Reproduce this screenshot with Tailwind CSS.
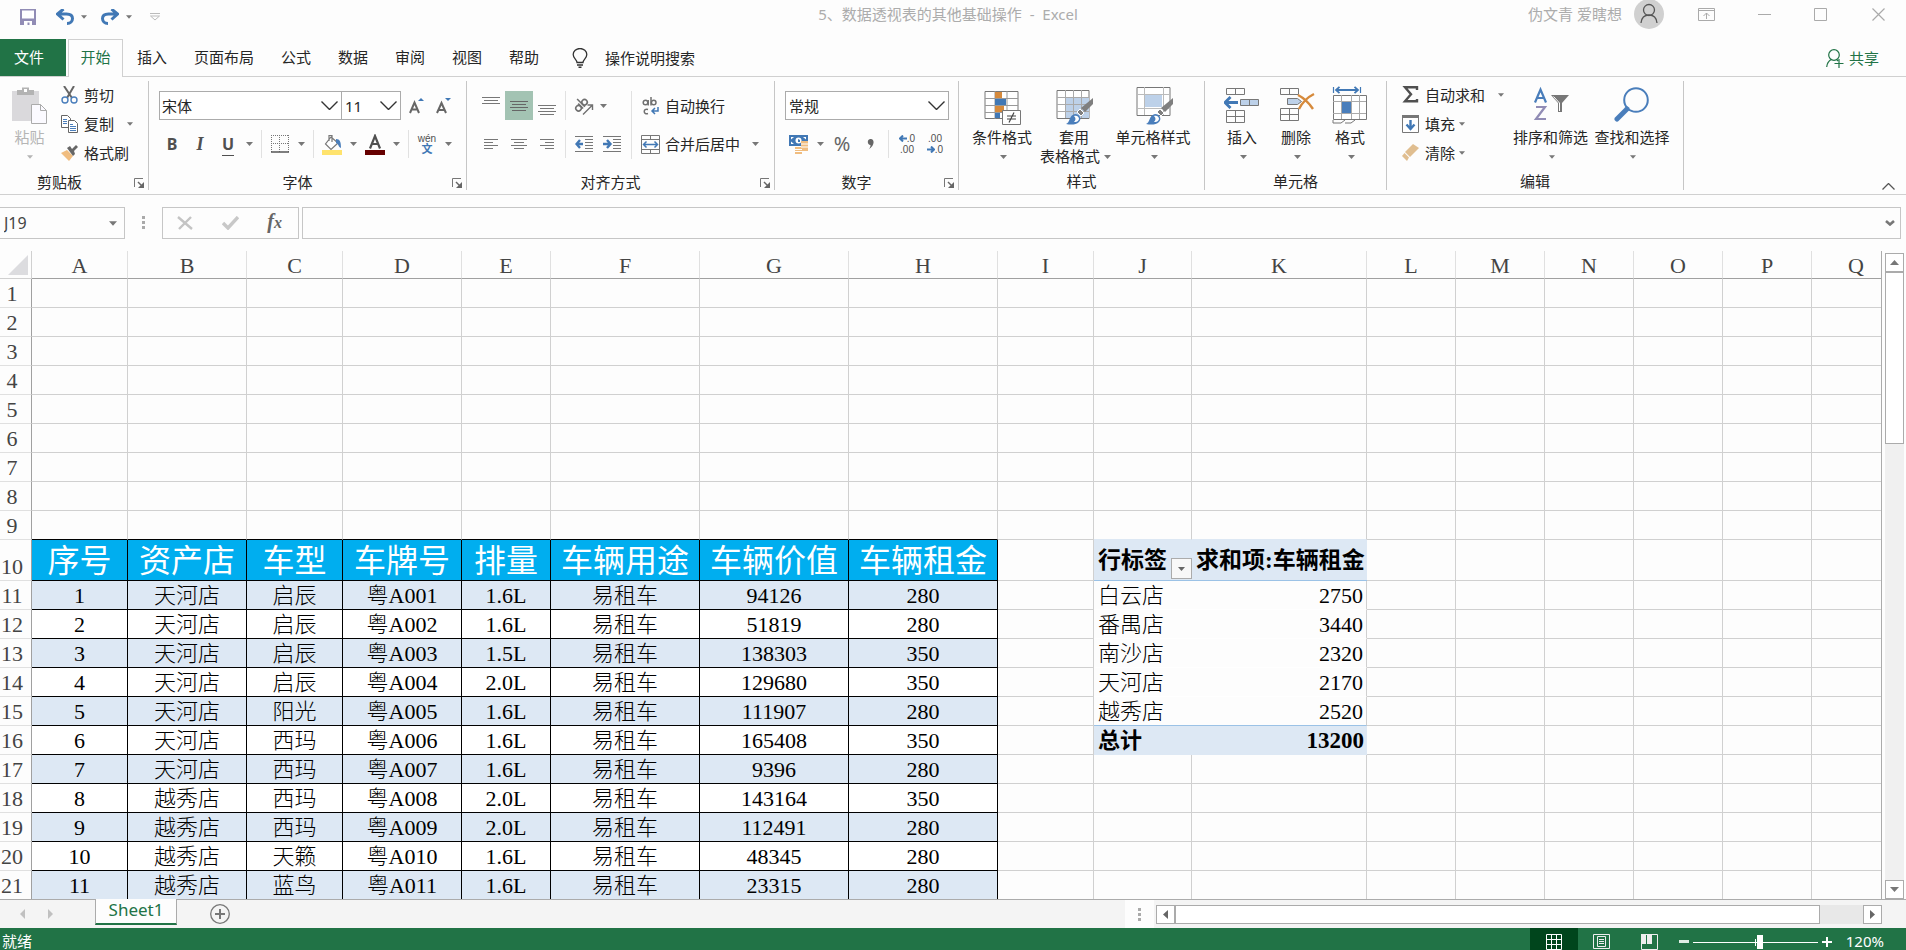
<!DOCTYPE html>
<html lang="zh-CN">
<head>
    <meta charset="UTF-8">
    <meta name="viewport" content="width=device-width, initial-scale=1.0">
    <title>5、数据透视表的其他基础操作 - Excel</title>
    <script src="https://cdn.jsdelivr.net/npm/@tailwindcss/browser@4"></script>
</head>
<body class="bg-[#fdfdfd] font-['Noto_Sans','Noto_Sans_CJK_SC',sans-serif] text-[15px] leading-5 text-[#262626]">

<svg class="hidden" xmlns="http://www.w3.org/2000/svg">
    <symbol id="caret" viewBox="0 0 7 4"><path d="M0 0h7L3.5 4z" fill="currentColor"/></symbol>
    <symbol id="chevron" viewBox="0 0 17 9"><path d="M.5.5l8 8 8-8" fill="none" stroke="#333" stroke-width="1.4"/></symbol>
    <symbol id="launcher" viewBox="0 0 11 11"><path d="M.5 9V.5H9" fill="none" stroke="#777"/><path d="M4 4l4 4" stroke="#666" stroke-width="1.5"/><path d="M10 4v6H4z" fill="#666"/></symbol>
    <symbol id="brush" viewBox="0 0 28 28"><path d="M27 0v6l-8 8-4-4z" fill="#7f7f7f"/><path d="M14 11l4 4-3 3-4-4z" fill="#7f7f7f" stroke="#fff"/><path d="M0 26c4-1 3-9 9-10 5 0 7 5 4 8-3 3-8 3-13 2z" fill="#4a7ebb"/><path d="M8 18c3-1 5 1 5 3-1 3-3 3-5 3 2-2 2-4 0-6z" fill="#fff"/></symbol>
</svg>

<div class="flex flex-col h-screen overflow-hidden">

    <!-- Barra de título -->
    <header class="flex items-start justify-between h-[39px] shrink-0 text-[#acacac]">
        <div class="flex items-center h-[33px] pl-5">
            <button aria-label="保存"><svg class="w-4 h-4" viewBox="0 0 16 16"><path d="M0 0h16v16H0z" fill="#918cb5"/><path d="M2 1.500h12v8H2zM4 12h8v4H9.500v-2.500h-2V16H4z" fill="#fff"/></svg></button>
            <button class="ml-5" aria-label="撤消"><svg class="w-[18px] h-4" viewBox="0 0 18 16"><path d="M7.500 0L1.500 5l6 5.500M2 5h8.500c4 0 6 2 6 4.500s-2 5-5.500 5" fill="none" stroke="#4178b5" stroke-width="3"/></svg></button>
            <button class="ml-[7px] text-[#777]" aria-label="撤消列表"><svg class="w-[6px] h-1"><use href="#caret"/></svg></button>
            <button class="ml-[14px]" aria-label="恢复"><svg class="w-[18px] h-4" viewBox="0 0 18 16"><path d="M10.500 0l6 5-6 5.500M16 5H7.500c-4 0-6 2-6 4.500s2 5 5.500 5" fill="none" stroke="#4178b5" stroke-width="3"/></svg></button>
            <button class="ml-[7px] text-[#777]" aria-label="恢复列表"><svg class="w-[6px] h-1"><use href="#caret"/></svg></button>
            <button class="ml-[18px]" aria-label="自定义快速访问工具栏"><svg class="w-[10px] h-[8px]" viewBox="0 0 10 8" fill="none" stroke="#bbb"><path d="M0 .5h10M.5 3l4.500 4L9.500 3z"/></svg></button>
        </div>
        <h1 class="pt-1 pl-[208px] whitespace-pre">5、数据透视表的其他基础操作  -  Excel</h1>
        <div class="flex items-center h-7 pr-[21px]">
            <span>伪文青 爱瞎想</span>
            <button class="ml-3 -mt-px" aria-label="帐户"><svg class="w-[30px] h-[30px]" viewBox="0 0 30 30" fill="none"><circle cx="15" cy="15" r="15" fill="#d0d0d0"/><g stroke="#555" stroke-width="1.300"><circle cx="15" cy="11" r="5.500"/><path d="M7 24c.5-5 3.500-8 8-8s7.500 3 8 8"/></g></svg></button>
            <button class="ml-[34px]" aria-label="功能区显示选项"><svg class="w-[17px] h-[13px]" viewBox="0 0 17 13" fill="none" stroke="#aaa"><path d="M.5.5h16v12H.5zM.5 2.500h16M8.500 11V5M5.500 8l3-3 3 3"/></svg></button>
            <button class="ml-[43px]" aria-label="最小化"><svg class="w-[13px] h-[13px]" viewBox="0 0 13 13"><path d="M0 6.500h13" stroke="#aaa"/></svg></button>
            <button class="ml-[43px]" aria-label="最大化"><svg class="w-[13px] h-[13px]" viewBox="0 0 13 13"><path d="M.5.5h12v12H.5z" fill="none" stroke="#aaa"/></svg></button>
            <button class="ml-[45px]" aria-label="关闭"><svg class="w-[13px] h-[13px]" viewBox="0 0 13 13"><path d="M.5.5l12 12M12.500.5l-12 12" stroke="#aaa" stroke-width="1.200"/></svg></button>
        </div>
    </header>

    <!-- Pestañas -->
    <nav class="flex h-[38px] shrink-0 border-b border-[#d0d0d0]">
        <button class="w-[66px] h-[37px] pb-[2px] pr-2 bg-[#217346] text-white">文件</button>
        <button class="w-[55px] h-[38px] pb-1 ml-[2px] border border-b-0 border-[#d0d0d0] bg-[#fdfdfd] text-[#217346]">开始</button>
        <div class="flex items-center gap-[27px] pl-[14px] pb-[2px] h-[37px]">
            <button>插入</button>
            <button>页面布局</button>
            <button>公式</button>
            <button>数据</button>
            <button>审阅</button>
            <button>视图</button>
            <button>帮助</button>
        </div>
        <button class="flex items-center gap-[17px] pl-[33px] h-[37px]">
            <svg class="w-4 h-5" viewBox="0 0 16 20" fill="none" stroke="#333" stroke-width="1.300"><path d="M5 14.500c0-3-3.800-4-3.800-8a6.800 6.000 0 0 1 13.600 0c0 4-3.800 5-3.800 8z"/><path d="M5 17h6M6.500 19.200h3" stroke-width="1.600"/></svg>
            <span>操作说明搜索</span>
        </button>
        <button class="flex items-center gap-[5px] ml-auto pr-[27px] h-[38px] text-[#217346]">
            <svg class="w-[18px] h-[19px]" viewBox="0 0 18 19" fill="none" stroke="#217346" stroke-width="1.200"><circle cx="8" cy="6" r="5.300"/><path d="M.7 18c.3-4 2-6 4.500-7.500M11 11l1 1M13 10v9M8.500 14.500h9"/></svg>
            <span>共享</span>
        </button>
    </nav>

    <!-- Cinta de opciones -->
    <section class="flex h-[118px] shrink-0 py-1 border-b border-[#d0d0d0]">
        <div class="flex flex-col w-[149px] border-r border-[#c6c6c6]">
            <div class="flex flex-1">
                <button class="flex flex-col items-center w-[61px] pt-[5px] pr-[2px] leading-[19px] text-[#b5b5b5]">
                    <svg class="w-[35px] h-10 mb-[2px]" viewBox="0 0 35 40"><path d="M0 5h27v30H0z" fill="#dad9dc"/><path d="M5 9V4h5V1.500h7V4h5v5z" fill="#b3b3b3"/><path d="M12 3h3v3h-3z" fill="#fff"/><path d="M19.500 18.500h9l6 6v13h-15z" fill="#fbfaff" stroke="#ababab"/><path d="M28.500 18.500v6h6" fill="none" stroke="#ababab"/></svg>
                    <span>粘贴</span>
                    <svg class="w-[6px] h-1 mt-2"><use href="#caret"/></svg>
                </button>
                <div class="flex flex-col -mt-px">
                    <button class="flex items-center gap-[6px] h-[29px]">
                        <svg class="w-[17px] h-[18px]" viewBox="0 0 17 18" fill="none"><path d="M3 0l8 12M13 0L6 12" stroke="#666" stroke-width="2"/><circle cx="4" cy="14" r="3" stroke="#4a7ebb" stroke-width="1.400"/><circle cx="13" cy="14" r="3" stroke="#4a7ebb" stroke-width="1.400"/></svg>
                        <span>剪切</span>
                    </button>
                    <button class="flex items-center gap-[6px] h-[29px]">
                        <svg class="w-[17px] h-[18px]" viewBox="0 0 17 18" fill="#fff"><path d="M.5.5h6l3 3v9h-9z" stroke="#666"/><path d="M2 4.500h4M2 6.500h4M2 8.500h4" stroke="#4a7ebb"/><path d="M7.500 5.500h6l3 3v9h-9z" stroke="#666"/><path d="M9 9.500h3M9 11.500h6M9 13.500h6M9 15.500h6" stroke="#4a7ebb"/></svg>
                        <span>复制</span>
                        <svg class="w-[6px] h-1 ml-[7px] text-[#777]"><use href="#caret"/></svg>
                    </button>
                    <button class="flex items-center gap-[6px] h-[29px]">
                        <svg class="w-[17px] h-[16px]" viewBox="0 0 17 16"><path d="M0 8l6-3 6 6-4 5z" fill="#f0bd80"/><path d="M6 3l3-2 2 3 4-4 2 2-4 4 1 3-2 2z" fill="#666"/></svg>
                        <span>格式刷</span>
                    </button>
                </div>
            </div>
            <div class="flex h-[17px] items-center">
                <h2 class="flex-1 text-center pr-[15px]">剪贴板</h2>
                <button class="w-[14px] pt-1" aria-label="剪贴板选项"><svg class="w-[11px] h-[11px]"><use href="#launcher"/></svg></button>
            </div>
        </div>

        <div class="flex flex-col w-[318px] border-r border-[#c6c6c6]">
            <div class="flex-1 pt-[10px] pl-[10px]">
                <div class="flex h-[29px]">
                    <div class="relative">
                        <select aria-label="字体" class="appearance-none w-[183px] h-[29px] border border-[#ababab] pl-[2px] bg-white"><option>宋体</option></select>
                        <svg class="absolute right-[4px] top-[10px] w-[17px] h-[9px] pointer-events-none"><use href="#chevron"/></svg>
                    </div>
                    <div class="relative -ml-px">
                        <select aria-label="字号" class="appearance-none w-[60px] h-[29px] border border-[#ababab] pl-[3px] bg-white"><option>11</option></select>
                        <svg class="absolute right-[4px] top-[10px] w-[17px] h-[9px] pointer-events-none"><use href="#chevron"/></svg>
                    </div>
                    <button class="w-7 grid place-items-center ml-[2px]" aria-label="增大字号"><svg class="w-4 h-4" viewBox="0 0 16 16"><path d="M1 15L5.500 4.500 10 15M2.800 11.500h5.500" fill="none" stroke="#666" stroke-width="2"/><path d="M9 3l3-3 3 3z" fill="#4178b5"/></svg></button>
                    <button class="w-[26px] grid place-items-center" aria-label="减小字号"><svg class="w-4 h-4" viewBox="0 0 16 16"><path d="M1 15L5.500 5 10 15M2.800 12h5.500" fill="none" stroke="#666" stroke-width="2"/><path d="M9 0h6l-3 3z" fill="#4178b5"/></svg></button>
                </div>
                <div class="flex h-7 mt-[10px] -ml-px text-[#777]">
                    <button class="w-7 text-base font-bold text-[#505050]">B</button>
                    <button class="w-7 text-lg font-bold italic font-['Liberation_Serif',serif] text-[#505050]">I</button>
                    <button class="w-7 text-base font-bold text-[#505050]"><span class="border-b border-[#505050]">U</span></button>
                    <button class="w-[15px] grid place-items-center" aria-label="下划线选项"><svg class="w-[7px] h-1"><use href="#caret"/></svg></button>
                    <i class="w-px mx-1 bg-[#e1e1e1]"></i>
                    <button class="w-7 grid place-items-center" aria-label="边框"><svg class="w-[18px] h-[18px]" viewBox="0 0 18 18" fill="none" stroke="#777"><path d="M.5 0v17M8.500 0v17M17.500 0v17M0 .5h18M0 8.500h18" stroke-dasharray="1 1"/><path d="M0 17h18" stroke="#555" stroke-width="1.500"/></svg></button>
                    <button class="w-[15px] grid place-items-center" aria-label="边框选项"><svg class="w-[7px] h-1"><use href="#caret"/></svg></button>
                    <i class="w-px mx-1 bg-[#e1e1e1]"></i>
                    <button class="w-7 grid place-items-center" aria-label="填充颜色"><svg class="w-5 h-[21px]" viewBox="0 0 20 21"><path d="M9 3l7 6-7 6.500L3.500 10zM7 7V1.500h3V8" fill="#fff" stroke="#777" stroke-width="1.200"/><path d="M14 5c4 0 5 3 5 9-3-1-2-4-5-5z" fill="#4a7ebb"/><path d="M0 16h20v5H0z" fill="#ffe36d"/></svg></button>
                    <button class="w-[15px] grid place-items-center" aria-label="填充颜色选项"><svg class="w-[7px] h-1"><use href="#caret"/></svg></button>
                    <button class="w-7 grid place-items-center" aria-label="字体颜色"><svg class="w-5 h-[21px]" viewBox="0 0 20 21"><path d="M5 14.500L10 2l5 12.500M6.500 10h7" fill="none" stroke="#505050" stroke-width="2.200"/><path d="M0 16h20v5H0z" fill="#600"/></svg></button>
                    <button class="w-[15px] grid place-items-center" aria-label="字体颜色选项"><svg class="w-[7px] h-1"><use href="#caret"/></svg></button>
                    <i class="w-px mx-1 bg-[#e1e1e1]"></i>
                    <button class="w-7 flex flex-col items-center justify-center text-[10px] leading-[10px] text-[#505050] font-['Liberation_Sans','Noto_Sans_CJK_SC',sans-serif]">wén<span class="text-[11px] leading-[11px] font-bold text-[#4178b5]">文</span></button>
                    <button class="w-[15px] grid place-items-center" aria-label="拼音选项"><svg class="w-[7px] h-1"><use href="#caret"/></svg></button>
                </div>
            </div>
            <div class="flex h-[17px] items-center">
                <h2 class="flex-1 text-center pr-[6px]">字体</h2>
                <button class="w-[14px] pt-1" aria-label="字体选项"><svg class="w-[11px] h-[11px]"><use href="#launcher"/></svg></button>
            </div>
        </div>

        <div class="flex flex-col w-[308px] border-r border-[#c6c6c6]">
            <div class="flex flex-1 pt-[10px] pl-[10px]">
                <div class="w-[154px]">
                    <div class="flex h-[29px] text-[#777]">
                        <button class="w-7 grid place-items-center" aria-label="顶端对齐"><svg class="w-[18px] h-5" viewBox="0 0 18 20" stroke="#777"><path d="M0 1.500h18M2 4.500h14M0 7.500h18"/></svg></button>
                        <button class="w-7 grid place-items-center bg-[#a3c3b3]" aria-label="垂直居中"><svg class="w-[18px] h-5" viewBox="0 0 18 20" stroke="#666"><path d="M0 5.500h18M2 8.500h14M0 11.500h18M2 14.500h14"/></svg></button>
                        <button class="w-7 grid place-items-center" aria-label="底端对齐"><svg class="w-[18px] h-5" viewBox="0 0 18 20" stroke="#777"><path d="M0 9.500h18M2 12.500h14M0 15.500h18M2 18.500h14"/></svg></button>
                        <i class="w-px mx-1 bg-[#e1e1e1]"></i>
                        <button class="w-7 grid place-items-center" aria-label="方向">
                            <svg class="w-5 h-5" viewBox="0 0 20 20" fill="none" stroke="#707070" stroke-width="1.600"><g transform="rotate(-45 7 9)"><circle cx="3" cy="9.500" r="2.700"/><path d="M6 6v7M8.500 2v11"/><circle cx="11.500" cy="9.500" r="2.700"/></g><path d="M9 18.500L18 9.500M13.500 9H18.500v5" stroke-width="1.400"/></svg>
                        </button>
                        <button class="w-[10px] grid place-items-center" aria-label="方向选项"><svg class="w-[7px] h-1"><use href="#caret"/></svg></button>
                    </div>
                    <div class="flex h-7 mt-[10px]">
                        <button class="w-7 grid place-items-center" aria-label="左对齐"><svg class="w-4 h-[12px]" viewBox="0 0 16 12" stroke="#777"><path d="M1 1.500h14M1 4.500h9M1 7.500h14M1 10.500h9"/></svg></button>
                        <button class="w-7 grid place-items-center" aria-label="居中"><svg class="w-4 h-[12px]" viewBox="0 0 16 12" stroke="#777"><path d="M0 1.500h16M3 4.500h10M0 7.500h16M3 10.500h10"/></svg></button>
                        <button class="w-7 grid place-items-center" aria-label="右对齐"><svg class="w-4 h-[12px]" viewBox="0 0 16 12" stroke="#777"><path d="M1 1.500h14M6 4.500h9M1 7.500h14M6 10.500h9"/></svg></button>
                        <i class="w-px mx-1 bg-[#e1e1e1]"></i>
                        <button class="w-7 grid place-items-center" aria-label="减少缩进量"><svg class="w-[18px] h-4" viewBox="0 0 18 16" fill="none"><path d="M0 .5h18M10 3.500h8M10 6.500h8M10 9.500h8M10 12.500h8M0 15.500h18" stroke="#777"/><path d="M8 8H2M5 4L1.500 8 5 12" stroke="#4178b5" stroke-width="2.400"/></svg></button>
                        <button class="w-7 grid place-items-center" aria-label="增加缩进量"><svg class="w-[18px] h-4" viewBox="0 0 18 16" fill="none"><path d="M0 .5h18M10 3.500h8M10 6.500h8M10 9.500h8M10 12.500h8M0 15.500h18" stroke="#777"/><path d="M0 8h6M4 4l3.500 4L4 12" stroke="#4178b5" stroke-width="2.400"/></svg></button>
                    </div>
                </div>
                <div class="border-l border-[#e1e1e1] h-[68px] pl-[9px]">
                    <button class="flex items-center gap-1 h-[29px]">
                        <svg class="w-5 h-[18px]" viewBox="0 0 20 18" fill="none" stroke="#707070" stroke-width="1.500"><circle cx="4.500" cy="5.500" r="2.300"/><path d="M7.200 3v5.500M10 0v8.500"/><circle cx="12.700" cy="5.500" r="2.300"/><path d="M7 12.500c-5-1.500-5 5.500 0 4"/><path d="M17 10v4h-6M14 11l-3 3 3 3" stroke="#4178b5"/></svg>
                        <span>自动换行</span>
                    </button>
                    <button class="flex items-center gap-1 h-7 mt-[10px]">
                        <svg class="w-5 h-[19px]" viewBox="0 0 20 19" fill="none"><path d="M.5.5h18v18H.5zM0 4.500h19M0 14.500h19M9.500 0v4M9.500 15v4" stroke="#777"/><path d="M3 9.500h13M5.500 6.500l-3 3 3 3M13.500 6.500l3 3-3 3" stroke="#4178b5" stroke-width="1.500"/></svg>
                        <span>合并后居中</span>
                        <svg class="w-[7px] h-1 ml-2 text-[#777]"><use href="#caret"/></svg>
                    </button>
                </div>
            </div>
            <div class="flex h-[17px] items-center">
                <h2 class="flex-1 text-center pr-[6px]">对齐方式</h2>
                <button class="w-[14px] pt-1" aria-label="对齐选项"><svg class="w-[11px] h-[11px]"><use href="#launcher"/></svg></button>
            </div>
        </div>

        <div class="flex flex-col w-[184px] border-r border-[#c6c6c6]">
            <div class="flex-1 pt-[10px] pl-[10px]">
                <div class="relative w-[164px]">
                    <select aria-label="数字格式" class="block appearance-none w-full h-[29px] border border-[#ababab] pl-[3px] bg-white"><option>常规</option></select>
                    <svg class="absolute right-[4px] top-[10px] w-[17px] h-[9px] pointer-events-none"><use href="#chevron"/></svg>
                </div>
                <div class="flex h-7 mt-[10px] text-[#777]">
                    <button class="w-7 grid place-items-center" aria-label="会计数字格式"><svg class="w-5 h-[19px]" viewBox="0 0 20 19"><path d="M0 0h19v11H0z" fill="#4178b5"/><path d="M2 2h3L2 4.500zM17 2h-3l3 2.500zM2 9h3L2 6.500z" fill="#fff"/><circle cx="9.500" cy="5.500" r="3" fill="#fff"/><path d="M9 4l2 1v2H9z" fill="#4178b5"/><path d="M12 6h7v10h-6v3H6v-7h6z" fill="#f0bd80"/><path d="M12 9h7M12 12h7M6 14.500h7M6 16.500h7" stroke="#fff"/></svg></button>
                    <button class="w-[15px] grid place-items-center" aria-label="会计格式选项"><svg class="w-[7px] h-1"><use href="#caret"/></svg></button>
                    <button class="w-7 text-xl text-[#666]">%</button>
                    <button class="w-7 grid place-items-center" aria-label="千位分隔样式"><svg class="w-[7px] h-[11px]" viewBox="0 0 7 11"><path d="M3 0c5-.5 5 7-1.500 10.500C3 9 3.500 7.500 3.500 6 0 6 0 .5 3 0z" fill="#666"/></svg></button>
                    <i class="w-px mx-1 bg-[#e1e1e1]"></i>
                    <button class="w-7 flex flex-col items-center justify-center text-[10px] leading-[11px] text-[#505050] font-['Liberation_Sans',sans-serif]"><span class="flex items-center"><svg class="w-2 h-[7px]" viewBox="0 0 8 7"><path d="M8 3.500H1.500M4 .5l-3 3 3 3" fill="none" stroke="#4178b5" stroke-width="2"/></svg>.0</span><span>.00</span></button>
                    <button class="w-7 flex flex-col items-center justify-center text-[10px] leading-[11px] text-[#505050] font-['Liberation_Sans',sans-serif]"><span>.00</span><span class="flex items-center"><svg class="w-2 h-[7px]" viewBox="0 0 8 7"><path d="M0 3.500h6.500M4 .5l3 3-3 3" fill="none" stroke="#4178b5" stroke-width="2"/></svg>.0</span></button>
                </div>
            </div>
            <div class="flex h-[17px] items-center">
                <h2 class="flex-1 text-center pr-[6px]">数字</h2>
                <button class="w-[14px] pt-1" aria-label="数字选项"><svg class="w-[11px] h-[11px]"><use href="#launcher"/></svg></button>
            </div>
        </div>

        <div class="flex flex-col w-[246px] border-r border-[#c6c6c6]">
            <div class="flex flex-1 pl-[7px] pt-[5px] leading-[19px]">
                <button class="flex flex-col items-center w-[72px]">
                    <svg class="w-[38px] h-10 mb-[2px] ml-[2px]" viewBox="0 0 38 40" fill="none"><path d="M1 5.500h33v27H1z" fill="#fff" stroke="#777"/><path d="M1 12.500h33M1 19.500h33M1 26.500h33M11 5v28M23 5v28" stroke="#999"/><path d="M11 6h7v6h-7zM11 20h9v6h-9z" fill="#d68a3c"/><path d="M11 13h11v6H11zM11 27h5v5h-5z" fill="#4178b5"/><path d="M18.500 24.500h18v14h-18z" fill="#fff" stroke="#777"/><path d="M23 30h9M23 33h9M30 26.500l-5 10" stroke="#444" stroke-width="1.200"/></svg>
                    <span>条件格式</span>
                    <svg class="w-[7px] h-1 mt-2 ml-[3px] text-[#777]"><use href="#caret"/></svg>
                </button>
                <button class="flex flex-col items-center w-[72px]">
                    <svg class="w-[38px] h-10 mb-[2px] ml-[2px]" viewBox="0 0 38 40" fill="none"><path d="M1 4.500h32v28H1z" fill="#fff" stroke="#777"/><path d="M9 12h24v20H9z" fill="#bdd1e9"/><path d="M1 11.500h32M1 18.500h32M1 25.500h32M9.500 4v28M17.500 4v28M25.500 4v28" stroke="#aaa"/><use href="#brush" x="10" y="12" width="28" height="28"/></svg>
                    <span>套用</span>
                    <span class="flex items-center gap-1 pl-[3px] whitespace-nowrap">表格格式<svg class="w-[7px] h-1 text-[#777]"><use href="#caret"/></svg></span>
                </button>
                <button class="flex flex-col items-center w-[86px]">
                    <svg class="w-[38px] h-10 mb-[2px] ml-1" viewBox="0 0 38 40" fill="none"><path d="M1 1.500h33v28H1z" fill="#fff" stroke="#777"/><path d="M1 8.500h33M1 22.500h33M8.500 1v28M27.500 1v28" stroke="#bbb"/><path d="M9 9h17v12H9z" fill="#bdd1e9"/><use href="#brush" x="10" y="12" width="28" height="28"/></svg>
                    <span>单元格样式</span>
                    <svg class="w-[7px] h-1 mt-2 ml-[3px] text-[#777]"><use href="#caret"/></svg>
                </button>
            </div>
            <h2 class="h-[17px] leading-[17px] text-center">样式</h2>
        </div>

        <div class="flex flex-col w-[182px] border-r border-[#c6c6c6]">
            <div class="flex flex-1 pl-[10px] pt-[5px] leading-[19px]">
                <button class="flex flex-col items-center w-[54px]">
                    <svg class="w-9 h-10 mb-[2px]" viewBox="0 0 36 40" fill="none"><path d="M2.500 2.500h18v6h-18zM11.500 2v6M2.500 24.500h18v12h-18zM2.500 30.500h18M11.500 24v12" stroke="#777"/><path d="M16.500 13.500h18v6h-18z" fill="#bdd1e9" stroke="#777"/><path d="M25.500 13v6" stroke="#777"/><path d="M14 16.500H2M6.500 11L1 16.500 6.500 22" stroke="#4178b5" stroke-width="2.800"/></svg>
                    <span>插入</span>
                    <svg class="w-[7px] h-1 mt-2 ml-[3px] text-[#777]"><use href="#caret"/></svg>
                </button>
                <button class="flex flex-col items-center w-[54px]">
                    <svg class="w-9 h-10 mb-[2px] ml-[2px]" viewBox="0 0 36 40" fill="none"><path d="M1.500 2.500h18v6h-18zM10.500 2v6M1.500 22.500h18v12h-18zM1.500 28.500h18M10.500 22v12" stroke="#777"/><path d="M8.500 12.500h10l4 3-4 3h-10z" fill="#bdd1e9" stroke="#777"/><path d="M19 9c6 3 11 8 15 14M35 8c-6 3-12 9-15 15" stroke="#d68a3c" stroke-width="2.400"/></svg>
                    <span>删除</span>
                    <svg class="w-[7px] h-1 mt-2 ml-[3px] text-[#777]"><use href="#caret"/></svg>
                </button>
                <button class="flex flex-col items-center w-[54px]">
                    <svg class="w-9 h-10 mb-[2px]" viewBox="0 0 36 40" fill="none"><path d="M1.500 1v6M28.500 1v6" stroke="#4178b5" stroke-width="1.200"/><path d="M4 4h22M7.500.8L4 4l3.500 3.200M22.500.8L26 4l-3.500 3.200" stroke="#4178b5" stroke-width="1.800"/><path d="M1.500 9.500h33v24h-33z" fill="#fff" stroke="#777"/><path d="M1 15.500h33M1 27.500h33M9.500 9v24M19.500 9v24M27.500 9v24" stroke="#aaa"/><path d="M10 16h9v11h-9z" fill="#4a7ebb"/><path d="M1 34v3h8l4-3M13 37h6l4-3" stroke="#777"/></svg>
                    <span>格式</span>
                    <svg class="w-[7px] h-1 mt-2 ml-[3px] text-[#777]"><use href="#caret"/></svg>
                </button>
            </div>
            <h2 class="h-[17px] leading-[17px] text-center">单元格</h2>
        </div>

        <div class="flex flex-col w-[297px] border-r border-[#c6c6c6]">
            <div class="flex flex-1">
                <div class="w-[123px] pl-[15px] -mt-px">
                    <button class="flex items-center gap-[6px] h-[29px] whitespace-nowrap">
                        <svg class="w-[17px] h-[17px]" viewBox="0 0 17 17"><path d="M15 4V1.200H3l6 7-6 7h12V13" fill="none" stroke="#505050" stroke-width="2.400"/></svg>
                        <span>自动求和</span>
                        <svg class="w-[6px] h-1 ml-[7px] text-[#777]"><use href="#caret"/></svg>
                    </button>
                    <button class="flex items-center gap-[6px] h-[29px]">
                        <svg class="w-[17px] h-[18px]" viewBox="0 0 17 18" fill="none"><path d="M.5.5h16v17H.5z" fill="#fff" stroke="#777"/><path d="M0 1.500h17" stroke="#777" stroke-width="3"/><path d="M8.500 5v8M4.500 9.500l4 4.500 4-4.500" stroke="#4178b5" stroke-width="2.400"/></svg>
                        <span>填充</span>
                        <svg class="w-[6px] h-1 -ml-[2px] text-[#777]"><use href="#caret"/></svg>
                    </button>
                    <button class="flex items-center gap-[6px] h-[29px]">
                        <svg class="w-[17px] h-[17px]" viewBox="0 0 17 17"><path d="M11 0l6 4-9 9-5-5z" fill="#e0be90"/><path d="M2.500 9L7 13.500 5 17 0 12z" fill="#e0be90"/></svg>
                        <span>清除</span>
                        <svg class="w-[6px] h-1 -ml-[2px] text-[#777]"><use href="#caret"/></svg>
                    </button>
                </div>
                <button class="flex flex-col items-center w-[81px] pt-[5px] leading-[19px]">
                    <svg class="w-9 h-10 mb-[2px]" viewBox="0 0 36 40" fill="none"><path d="M2 16.500L7.500 3.500 13 16.500M4 12h7" stroke="#4a7ebb" stroke-width="2.200"/><path d="M3 21h9L3 33h10" stroke="#918cb5" stroke-width="2.200"/><path d="M18 9h18l-7 8v9h-4v-9z" fill="#777"/><path d="M20.500 10.500l6 6.500v8" stroke="#fff"/></svg>
                    <span>排序和筛选</span>
                    <svg class="w-[6px] h-1 mt-2 ml-[2px] text-[#777]"><use href="#caret"/></svg>
                </button>
                <button class="flex flex-col items-center w-[82px] pt-[5px] leading-[19px]">
                    <svg class="w-9 h-10 mb-[2px]" viewBox="0 0 36 40" fill="none" stroke="#4a7ebb"><circle cx="22" cy="14" r="11.800" stroke-width="2"/><path d="M13 23L3 33" stroke-width="5" stroke-linecap="round"/></svg>
                    <span>查找和选择</span>
                    <svg class="w-[6px] h-1 mt-2 ml-[2px] text-[#777]"><use href="#caret"/></svg>
                </button>
            </div>
            <h2 class="h-[17px] leading-[17px] text-center">编辑</h2>
        </div>
        <button class="self-end ml-auto mr-[11px]" aria-label="折叠功能区"><svg class="w-[13px] h-[7px]" viewBox="0 0 13 7"><path d="M.5 6.500l6-6 6 6" fill="none" stroke="#555" stroke-width="1.300"/></svg></button>
    </section>

    <!-- Barra de fórmulas -->
    <section class="flex h-[56px] shrink-0 py-3 pr-[5px]">
        <div class="flex items-center w-[125px] border border-l-0 border-[#c6c6c6]">
            <input aria-label="名称框" value="J19" class="w-[109px] pl-1 outline-none text-base text-[#444]">
            <button aria-label="名称列表" class="text-[#777]"><svg class="w-2 h-[5px]"><use href="#caret"/></svg></button>
        </div>
        <svg class="w-[3px] h-[13px] mx-[17px] mt-[9px]" viewBox="0 0 3 13"><path d="M0 0h3v3H0zM0 5h3v3H0zM0 10h3v3H0z" fill="#aaa"/></svg>
        <div class="flex items-center justify-between w-[137px] pl-[14px] pr-4 border border-[#c6c6c6]">
            <button aria-label="取消"><svg class="w-4 h-[14px]" viewBox="0 0 16 14"><path d="M1 1l14 12M14 1L2 13" stroke="#c4c4c4" stroke-width="2.400"/></svg></button>
            <button aria-label="输入"><svg class="w-[17px] h-[14px]" viewBox="0 0 17 14"><path d="M1 7l5 5L16 1" fill="none" stroke="#c8c8c8" stroke-width="3.400"/></svg></button>
            <button aria-label="插入函数" class="font-['Liberation_Serif',serif] italic font-bold text-xl leading-5 text-[#666]">f<span class="text-base">x</span></button>
        </div>
        <div class="flex items-center flex-1 ml-[3px] pr-[5px] border border-[#c6c6c6]">
            <input aria-label="编辑栏" class="flex-1 h-full outline-none px-1">
            <button aria-label="展开编辑栏"><svg class="w-[10px] h-[6px]" viewBox="0 0 10 6"><path d="M1 1l4 3.500L9 1" fill="none" stroke="#777" stroke-width="2.600"/></svg></button>
        </div>
    </section>

    <!-- Hoja -->
    <main class="flex flex-1 min-h-0 border-b border-[#ababab]">
        <div class="flex-1 min-w-0 overflow-hidden border-r border-[#ababab] font-['Liberation_Serif','Noto_Sans_CJK_SC',serif] text-[22px] leading-[26px] text-black">
            <table class="table-fixed w-[1901px] border-separate border-spacing-0">
                <colgroup>
                    <col class="w-[32px]"><col class="w-[96px]"><col class="w-[119px]"><col class="w-[96px]"><col class="w-[119px]"><col class="w-[89px]"><col class="w-[149px]"><col class="w-[149px]"><col class="w-[149px]"><col class="w-[96px]"><col class="w-[98px]"><col class="w-[175px]"><col class="w-[89px]"><col class="w-[89px]"><col class="w-[89px]"><col class="w-[89px]"><col class="w-[89px]"><col class="w-[89px]">
                </colgroup>
                <thead><tr id="cols" class="h-[28px]"></tr></thead>
                <tbody id="rows"></tbody>
            </table>
        </div>
        <div class="flex flex-col w-6 pl-[3px] pr-[2px] pt-[2px]">
            <button aria-label="向上滚动" class="grid place-items-center h-[19px] shrink-0 border border-[#ababab] bg-white"><svg class="w-[9px] h-[5px]" viewBox="0 0 9 5"><path d="M4.500 0L9 5H0z" fill="#777"/></svg></button>
            <div class="flex-1 bg-[#f0f0f0]"><div class="h-[172px] border border-[#ababab] bg-white"></div></div>
            <button aria-label="向下滚动" class="grid place-items-center h-[19px] shrink-0 border border-[#ababab] bg-white"><svg class="w-[9px] h-[5px]" viewBox="0 0 9 5"><path d="M0 0h9L4.500 5z" fill="#777"/></svg></button>
        </div>
    </main>

    <!-- Pestañas de hojas -->
    <section class="flex h-[28px] shrink-0 bg-[#f4f4f4]">
        <div class="flex items-center w-[95px] pl-5 gap-[23px]">
            <button aria-label="上一张"><svg class="w-[5px] h-[10px]" viewBox="0 0 5 10"><path d="M5 0v10L0 5z" fill="#c0c0c0"/></svg></button>
            <button aria-label="下一张"><svg class="w-[5px] h-[10px]" viewBox="0 0 5 10"><path d="M0 0v10l5-5z" fill="#c0c0c0"/></svg></button>
        </div>
        <button class="w-[82px] h-[26px] -mt-px pb-[2px] border-x border-x-[#ababab] border-b-2 border-b-[#217346] bg-[#fdfdfd] text-[17px] text-[#217346]">Sheet1</button>
        <button class="ml-[33px]" aria-label="新工作表"><svg class="w-5 h-5" viewBox="0 0 20 20" fill="none" stroke="#777"><circle cx="10" cy="10" r="9.300" stroke-width="1.300"/><path d="M5 10h10M10 5v10" stroke-width="2"/></svg></button>
        <div class="flex items-center ml-auto mr-6 w-[757px]">
            <div class="grid place-items-center w-[29px] h-full mr-[2px] bg-[#fdfdfd]"><svg class="w-[3px] h-[13px]" viewBox="0 0 3 13"><path d="M0 0h3v3H0zM0 5h3v3H0zM0 10h3v3H0z" fill="#aaa"/></svg></div>
            <button aria-label="向左滚动" class="grid place-items-center w-[19px] h-[19px] border border-[#ababab] bg-white"><svg class="w-[5px] h-[9px]" viewBox="0 0 5 9"><path d="M5 0v9L0 4.500z" fill="#666"/></svg></button>
            <div class="flex-1 pr-[43px] bg-[#e8e8e8]"><div class="h-[19px] border border-[#ababab] bg-white"></div></div>
            <button aria-label="向右滚动" class="grid place-items-center w-[19px] h-[19px] border border-[#ababab] bg-white"><svg class="w-[5px] h-[9px]" viewBox="0 0 5 9"><path d="M0 0v9l5-4.500z" fill="#666"/></svg></button>
        </div>
    </section>

    <!-- Barra de estado -->
    <footer class="flex h-[22px] shrink-0 overflow-hidden bg-[#217346] text-white">
        <span class="h-[22px] pl-[2px] pt-1 leading-[18px]">就绪</span>
        <div class="flex ml-auto pr-[22px]">
            <button class="w-12 h-[22px] grid justify-center pt-[6px] bg-[#00451c]" aria-label="普通"><svg class="w-4 h-4" viewBox="0 0 16 16" fill="none" stroke="#fff"><path d="M.5.5h15v15H.5zM5.500 0v16M10.500 0v16M0 5.500h16M0 10.500h16"/></svg></button>
            <button class="w-12 h-[22px] grid justify-center pt-[6px]" aria-label="页面布局"><svg class="w-[17px] h-4" viewBox="0 0 17 16" fill="none" stroke="#eee"><path d="M.5.5h16v14H.5zM4.500 2.500h8v10h-8zM6 5.500h5M6 7.500h5M6 9.500h5"/></svg></button>
            <button class="w-12 h-[22px] grid justify-center pt-[6px]" aria-label="分页预览"><svg class="w-[17px] h-4" viewBox="0 0 17 16"><path d="M.5.5h16v15H.5z" fill="none" stroke="#eee"/><path d="M0 0h5v10H0zM6 0h5v10H6z" fill="#eee"/></svg></button>
            <button class="flex items-start ml-[5px] pt-3" aria-label="缩小"><svg class="block w-[10px] h-[3px]"><path d="M0 0h10v3H0z" fill="#dfeee5"/></svg></button>
            <div class="relative w-[125px] ml-1">
                <input type="range" min="10" max="230" value="120" aria-label="缩放" class="absolute inset-0 w-full opacity-0">
                <svg class="w-[125px] h-[22px] pointer-events-none" viewBox="0 0 125 22"><path d="M0 14.500h125M62.500 11v7" stroke="#fff"/><path d="M64 7h6v14h-6z" fill="#fff"/></svg>
            </div>
            <button class="flex items-start ml-1 pt-[9px]" aria-label="放大"><svg class="block w-[10px] h-[10px]" viewBox="0 0 10 10"><path d="M0 5h10M5 0v10" stroke="#fff" stroke-width="2"/></svg></button>
            <span class="pl-[14px] pt-1 leading-[18px]">120%</span>
        </div>
    </footer>
</div>

<script>
    const COLS = 'ABCDEFGHIJKLMNOPQ'.split('');
    const encabezados = ['序号', '资产店', '车型', '车牌号', '排量', '车辆用途', '车辆价值', '车辆租金'];
    const autos = [
        ['天河店', '启辰', '1.6L', 94126, 280],
        ['天河店', '启辰', '1.6L', 51819, 280],
        ['天河店', '启辰', '1.5L', 138303, 350],
        ['天河店', '启辰', '2.0L', 129680, 350],
        ['天河店', '阳光', '1.6L', 111907, 280],
        ['天河店', '西玛', '1.6L', 165408, 350],
        ['天河店', '西玛', '1.6L', 9396, 280],
        ['越秀店', '西玛', '2.0L', 143164, 350],
        ['越秀店', '西玛', '2.0L', 112491, 280],
        ['越秀店', '天籁', '1.6L', 48345, 280],
        ['越秀店', '蓝鸟', '1.6L', 23315, 280]
    ];
    const pivot = [['白云店', 2750], ['番禺店', 3440], ['南沙店', 2320], ['天河店', 2170], ['越秀店', 2520]];

    const filtro = '<button aria-label="筛选" class="absolute right-0 bottom-[1px] grid place-items-center w-[21px] h-[21px] border border-[#ababab] bg-[#f8f8f8] text-[#666]"><svg class="w-[7px] h-1"><use href="#caret"/></svg></button>';

    // Devuelve el <td> de la fila r (1-21) y la columna c (0 = A)
    function celda(r, c) {
        if (r === 9 && c < 8) return '<td class="border-r border-b border-r-[#d0d0d0] border-b-black"></td>';
        if (r === 10 && c < 8) return `<td class="border-r border-b border-black bg-[#00aeef] pt-[2px] text-white text-center text-[32px] leading-[38px] whitespace-nowrap">${encabezados[c]}</td>`;
        if (r > 10 && c < 8) {
            const n = r - 10, a = autos[n - 1];
            const valores = [n, a[0], a[1], '粤A' + String(n).padStart(3, '0'), a[2], '易租车', a[3], a[4]];
            const fondo = n % 2 ? 'bg-[#dde8f4]' : 'bg-white';
            return `<td class="border-r border-b border-black pt-[2px] text-center font-light whitespace-nowrap ${fondo}">${valores[c]}</td>`;
        }
        // Tabla dinámica en J9:K16
        if (r === 9 && (c === 9 || c === 10)) return '<td class="border-r border-b border-r-[#d0d0d0] border-b-[#dde8f4]"></td>';
        if (r === 10 && c === 9) return `<td class="relative border-b border-[#9bc2e6] bg-[#dde8f4] pl-1 pt-[2px] text-[23px] font-bold whitespace-nowrap">行标签${filtro}</td>`;
        if (r === 10 && c === 10) return '<td class="border-b border-[#9bc2e6] bg-[#dde8f4] pl-1 pt-[2px] text-[23px] font-bold whitespace-nowrap">求和项:车辆租金</td>';
        if (r > 10 && r < 16 && c === 9) return `<td class="border-b ${r === 15 ? 'border-[#9bc2e6]' : 'border-white'} pl-1 pt-[2px] font-light">${pivot[r - 11][0]}</td>`;
        if (r > 10 && r < 16 && c === 10) return `<td class="border-r border-b border-r-[#d0d0d0] ${r === 15 ? 'border-b-[#9bc2e6]' : 'border-b-white'} pr-[3px] pt-[2px] text-right">${pivot[r - 11][1]}</td>`;
        if (r === 16 && c === 9) return '<td class="border-b border-[#dde8f4] bg-[#dde8f4] pl-1 pt-[2px] font-bold">总计</td>';
        if (r === 16 && c === 10) return '<td class="border-b border-[#dde8f4] bg-[#dde8f4] pr-[3px] pt-[2px] text-right text-[23px] font-bold">13200</td>';
        return '<td class="border-r border-b border-[#d0d0d0]"></td>';
    }

    document.getElementById('cols').innerHTML =
        '<th class="border-r border-b border-[#d0d0d0]"><svg class="w-5 h-5 ml-2" viewBox="0 0 20 20"><path d="M20 0v20H0z" fill="#dcdcdf"/></svg></th>' +
        COLS.map(l => `<th scope="col" class="border-r border-b border-r-[#e0e0e0] border-b-[#a0a0a0] pt-[2px] leading-[25px] font-normal text-[#444]">${l}</th>`).join('');

    let html = '';
    for (let r = 1; r <= 21; r++) {
        html += `<tr class="${r === 10 ? 'h-[41px]' : 'h-[29px]'}"><th scope="row" class="border-r border-b border-r-[#a0a0a0] border-b-[#e0e0e0] pt-[2px] pr-[7px] align-bottom font-normal text-[#444]">${r}</th>`;
        for (let c = 0; c < COLS.length; c++) html += celda(r, c);
        html += '</tr>';
    }
    document.getElementById('rows').innerHTML = html;
</script>
</body>
</html>
